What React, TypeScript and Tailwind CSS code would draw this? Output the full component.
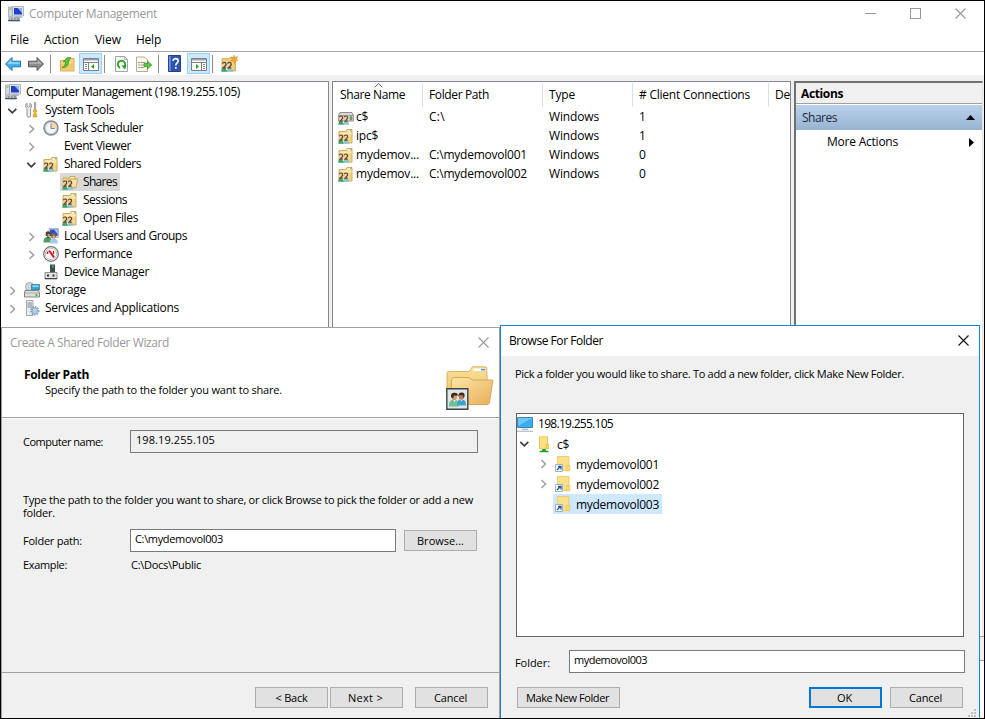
import { useLayoutEffect, useRef } from 'react'
import type { ReactNode } from 'react'
import clsx from 'clsx'

// Text run spread to a fixed advance width, like GDI does with its hinted metrics
function T({ w, children, className }: { w: number; children: string; className?: string }) {
  const ref = useRef<HTMLSpanElement>(null)

  useLayoutEffect(() => {
    const el = ref.current
    if (!el) return
    el.style.letterSpacing = '0px'
    const natural = el.getBoundingClientRect().width
    el.style.letterSpacing = `${(w - natural) / children.length}px`
  }, [w, children])

  return (
    <span ref={ref} className={clsx('whitespace-pre w-fit shrink-0', className ?? 'inline-block')}>
      {children}
    </span>
  )
}

function Svg({ children, size = 16 }: { children: ReactNode; size?: number }) {
  return (
    <svg width={size} height={size} viewBox="0 0 16 16" className="shrink-0">
      {children}
    </svg>
  )
}

function ComputerIcon() {
  return (
    <Svg>
      <path d="M.5 1h4v10h-4z" fill="#d4d8dc" stroke="#8a9096" strokeWidth=".6" />
      <path d="M4.5.5h11v9.5h-11z" fill="#dfe4ec" stroke="#9aa4b2" strokeWidth=".8" />
      <path d="M6 2h8v6.5H6z" fill="#1f3fc4" />
      <path d="M9.500 2H14v5z" fill="#8fb4f4" />
      <path d="M6.500 10h7l1 2H6z" fill="#b9bec6" />
      <path d="M.5 11.500h11v4H.5z" fill="#8a949c" />
      <path d="M1.500 12.500H3v1H1.500zM4.500 12.500H6v1H4.500zM7.500 12.500H9v1H7.500z" fill="#eef2f3" />
      <path d="M0 14.500h12" stroke="#4c565e" />
      <path d="M1.500 3h2" stroke="#5fae4a" />
    </Svg>
  )
}

function People() {
  return (
    <>
      <path d="M.3 15.800c0-2.200.700-3.600 2.700-3.600s3 1.300 3 3.600z" fill="#3aa66f" />
      <path d="M5.300 15.800c0-2.200 1-3.600 3-3.600s2.900 1.600 2.900 3.600z" fill="#8cc5c9" />
      <path d="M4.200 12l1 2.500 1.300-2.500z" fill="#f4f8f4" />
      <ellipse cx="3.200" cy="9.500" rx="2.100" ry="2.900" fill="#ecd0a6" />
      <ellipse cx="8" cy="9.500" rx="2.100" ry="2.900" fill="#ecd0a6" />
      <path d="M1.300 8.200q1.400-2 3.100-.7q1 1.500-.6 2.900l-1.800 1.800h2.800" fill="none" stroke="#5b4630" strokeWidth="1.200" />
      <path d="M6.200 8.200q1.400-2 3.100-.7q1 1.500-.6 2.900l-1.800 1.800h2.800" fill="none" stroke="#5b4630" strokeWidth="1.200" />
    </>
  )
}

function SharedFolderIcon() {
  return (
    <Svg>
      <path d="M1 3.500h6.500L9 1.500h5V15H1z" fill="#f3d68c" stroke="#cba552" strokeWidth=".9" />
      <path d="M2 4.500h11.500v2H2z" fill="#fbeab6" />
      <path d="M9.800 3h3" stroke="#fff" />
      <path d="M12 2.800h1.500" stroke="#7f9cc4" />
      <People />
    </Svg>
  )
}

function OpenSharedIcon() {
  return (
    <Svg>
      <path d="M1 4h6l1-1.500h5V14H1z" fill="#f3d68c" stroke="#cba552" strokeWidth=".9" />
      <path d="M9 3.800h3" stroke="#fff" />
      <path d="M4.500 6H8l1-1h6.800L14 13.500H3z" fill="#f9e0a0" stroke="#cba552" strokeWidth=".9" />
      <People />
    </Svg>
  )
}

function NewShareIcon() {
  return (
    <Svg size={17}>
      <path d="M1 3.500h6l1-1h5.500V15H1z" fill="#f0cf7e" stroke="#cba552" strokeWidth=".9" />
      <People />
      <path d="M12.300 0l.9 2.300 2.500-.8-1.200 2.200 1.500 1.600-2.400.2-.8 2.400-1.100-2.300-2.600.3 1.500-1.900-1.400-2 2.300.3z" fill="#f7a436" stroke="#e5811a" strokeWidth=".4" />
    </Svg>
  )
}

function DriveShareIcon() {
  return (
    <Svg>
      <path d="M2 3.500h12l1.700 3V12H.3V6.500z" fill="#d9d9d9" stroke="#777" strokeWidth=".8" />
      <path d="M.3 6.500h15.400" stroke="#8f8f8f" strokeWidth=".8" />
      <path d="M12 7.700h2v3h-2z" fill="#45d40c" stroke="#666" strokeWidth=".5" />
      <People />
    </Svg>
  )
}

function ToolsIcon() {
  return (
    <Svg>
      <path
        d="M3 1.200v3l1.500 1 1.500-1v-3c2 1 2 4 .6 5.300V14c0 1.600-3.600 1.600-3.600 0V6.500C1 5 1.200 2.200 3 1.200z"
        fill="#e8eaec"
        stroke="#858b90"
        strokeWidth=".9"
      />
      <path d="M10.500.5h1.200v7h-1.200z" fill="#ccc" stroke="#777" strokeWidth=".6" />
      <path d="M9.500 8h3v2l-.6.5v1l.8 1V15H9.400v-2.500l.8-1v-1L9.500 10z" fill="#f2b620" stroke="#c98d08" strokeWidth=".6" />
    </Svg>
  )
}

function ClockIcon() {
  return (
    <Svg>
      <circle cx="8" cy="8" r="7" fill="#dde1e4" stroke="#858c92" strokeWidth="1.500" />
      <circle cx="8" cy="8" r="5.500" fill="#f1f6fa" stroke="#a9b0b6" strokeWidth=".5" />
      <path d="M8 8V2.500A5.500 5.500 0 0 1 13.500 8z" fill="#f6d9a0" />
      <path d="M8 3.500V8.500h3.700" stroke="#7c858f" strokeWidth="1" fill="none" />
    </Svg>
  )
}

function UsersIcon() {
  return (
    <Svg>
      <path d="M6 .5h9.500v9H6z" fill="#d8dde6" stroke="#9aa4b2" strokeWidth=".7" />
      <path d="M7 1.500h7.500V8H7z" fill="#2a4fcd" />
      <path d="M11 1.500h3.500V6z" fill="#a9c4f8" />
      <path d="M.5 14.500c0-4 1.500-5.500 4-5.500S9 10 9 14.500z" fill="#4f9a62" />
      <path d="M2.700 4.500q2.300-2.500 4.600 0V8H6v2H4.200V8H2.700z" fill="#54432c" />
      <path d="M4.700 6h2v3h-2z" fill="#cfa276" />
      <path d="M6.500 15.500c0-4 1.800-5 4-5s4.500 1 4.500 5z" fill="#a5cdea" />
      <path d="M8.200 6q2.300-2.500 4.600 0v3.500h-1.300V11H9.700V9.500H8.200z" fill="#80603c" />
      <path d="M9.700 7.500h2V11h-2z" fill="#e0b68c" />
    </Svg>
  )
}

function PerfIcon() {
  return (
    <Svg>
      <circle cx="8" cy="8" r="7.300" fill="#fff" stroke="#757575" strokeWidth="1.200" />
      <circle cx="8" cy="8" r="5.700" fill="#fff" stroke="#a5a5a5" strokeWidth=".7" />
      <path d="M4.500 8V5.500" stroke="#d3141c" strokeWidth="1.500" />
      <path d="M6 4.500l5 6.800" stroke="#d3141c" strokeWidth="2" />
      <path d="M10.500 8V5" stroke="#d3141c" strokeWidth="1.400" />
    </Svg>
  )
}

function DeviceIcon() {
  return (
    <Svg>
      <path d="M7 .5h5V9H7z" fill="#444b52" />
      <path d="M9 1.500h1.500v2H9z" fill="#53c452" />
      <path d="M2 8.500h12V15H2z" fill="#e2e2e2" stroke="#777" strokeWidth=".8" />
      <path d="M4 10.500h2v2H4zM9.500 10.500h2v2h-2z" fill="#333" />
      <path d="M2 14.500h12" stroke="#444" />
    </Svg>
  )
}

function StorageIcon() {
  return (
    <Svg>
      <circle cx="5.500" cy="4.500" r="4" fill="#d9dde0" stroke="#8b9298" strokeWidth=".8" />
      <circle cx="5.500" cy="4.500" r="1.200" fill="#fff" stroke="#8b9298" strokeWidth=".5" />
      <path d="M7.500 2.500h8V8h-8z" fill="#38a3d3" stroke="#2678a5" strokeWidth=".7" />
      <path d="M8.500 3.500h6V5h-6z" fill="#9ddcf5" />
      <path d="M1 8.500h13.500l1 2.500v4H.5v-4z" fill="#dedede" stroke="#6d6d6d" strokeWidth=".8" />
      <path d="M.5 11h15" stroke="#888" strokeWidth=".6" />
      <path d="M11.500 12h2v2h-2z" fill="#3fcc19" />
    </Svg>
  )
}

function ServicesIcon() {
  return (
    <Svg>
      <path d="M2.500.5H9v15H2.500z" fill="#e9ebed" stroke="#8e959c" strokeWidth=".8" />
      <path d="M3.500 3H8M3.500 5H8M3.500 7H8" stroke="#737b84" strokeWidth=".9" />
      <circle cx="10.800" cy="10.800" r="3.800" fill="none" stroke="#7d9fbd" strokeWidth="1.800" strokeDasharray="1.500 1" />
      <circle cx="10.800" cy="10.800" r="2.700" fill="#cfe0ee" stroke="#7d9fbd" strokeWidth=".9" />
      <circle cx="10.800" cy="10.800" r="1" fill="#fff" stroke="#6d8fae" strokeWidth=".5" />
    </Svg>
  )
}

function ArrowIcon({ back }: { back?: boolean }) {
  return back ? (
    <Svg>
      <path d="M.5 8L7 1.500v3.700h8.500v5.600H7v3.700z" fill="#45b1ec" stroke="#1b72b4" strokeWidth="1" />
      <path d="M2.300 7.700L6.200 3.900v2.300h8.300v1.500z" fill="#9bddfa" />
    </Svg>
  ) : (
    <Svg>
      <path d="M15.500 8L9 1.500v3.700H.5v5.600H9v3.700z" fill="#8c8c8c" stroke="#555" strokeWidth="1" />
      <path d="M13.700 7.700L9.800 3.900v2.300H1.500v1.500z" fill="#b4b4b4" />
    </Svg>
  )
}

function UpFolderIcon() {
  return (
    <Svg>
      <path d="M1.500 4.500h5l1.500-2h7V15H1.500z" fill="#f3d582" stroke="#c99c3c" strokeWidth=".8" />
      <path d="M2 8h12.500v6.500H2z" fill="#eec770" />
      <path d="M3 11.500c2.500-1 3.500-3 3.500-5.800H4L8.500 1.500h3.200L9.500 5.700c0 4-2.500 6.300-6.500 5.800z" fill="#56c23a" stroke="#2b8a17" strokeWidth=".6" />
    </Svg>
  )
}

function PaneIcon({ right }: { right?: boolean }) {
  return (
    <Svg>
      <path d="M.5 2.500h15v12H.5z" fill="#fff" stroke="#7b8086" />
      <path d="M1 3h14v1.500H1z" fill="#9ba1a8" />
      <path d="M1 6.500h14" stroke="#7b8086" />
      <path d={right ? 'M10.500 6.500v8' : 'M5.500 6.500v8'} stroke="#7b8086" />
      {right ? (
        <>
          <path d="M5 8v5l3-2.500z" fill="#2ba31e" />
          <path d="M12 8.500h2M12 10.500h2M12 12.500h2" stroke="#7b8086" strokeWidth=".9" />
        </>
      ) : (
        <>
          <path d="M11 8v5L8 10.500z" fill="#2ba31e" />
          <path d="M2 8.500h2M2 10.500h2M2 12.500h2" stroke="#7b8086" strokeWidth=".9" />
        </>
      )}
    </Svg>
  )
}

function RefreshIcon() {
  return (
    <Svg>
      <path d="M2.500.5h9l3 3v12h-12z" fill="#fafafa" stroke="#9a9a9a" strokeWidth=".9" />
      <path d="M11.500.5v3h3" fill="none" stroke="#9a9a9a" strokeWidth=".8" />
      <path d="M7 11.800A3.700 3.700 0 1 1 11.500 10.500" fill="none" stroke="#2fa12b" strokeWidth="1.900" />
      <path d="M8.500 9.500h5L12 13.800z" fill="#2fa12b" />
    </Svg>
  )
}

function ExportIcon() {
  return (
    <Svg>
      <path d="M.5 1h8l3 3v11.500H.5z" fill="#fdf9ea" stroke="#a9a48c" strokeWidth=".9" />
      <path d="M2.500 6.500h1M2.500 9h1M2.500 11.500h1" stroke="#444" />
      <path d="M4.500 6.500h5M4.500 9h4M4.500 11.500h4" stroke="#8c8c8c" strokeWidth=".9" />
      <path d="M8 7.500h3.500V5l4.300 4-4.300 4v-2.500H8z" fill="#5cc83f" stroke="#2f9421" strokeWidth=".7" />
    </Svg>
  )
}

function HelpIcon() {
  return (
    <svg width="13" height="17" viewBox="0 0 14 17" preserveAspectRatio="none" className="shrink-0">
      <path d="M.5.5h13v16H.5z" fill="#2f54b0" stroke="#1e3a86" />
      <path d="M1 1h2v15H1z" fill="#6f8fdc" />
      <path d="M5.500 6c0-3.300 5.500-3.200 5.500 0 0 2-2.600 2-2.600 4.500M8.400 12v1.800" stroke="#fff" strokeWidth="1.700" fill="none" />
    </svg>
  )
}

function Chevron({ open }: { open?: boolean }) {
  return (
    <svg width="10" height="10" viewBox="0 0 10 10" className="shrink-0">
      {open ? (
        <path d="M1.300 2.800l4 4 4-4" fill="none" stroke="#3f3f3f" strokeWidth="1.700" />
      ) : (
        <path d="M3.500 1l4 4-4 4" fill="none" stroke="#a3a3a3" strokeWidth="1.600" />
      )}
    </svg>
  )
}

function Close({ color }: { color: string }) {
  return (
    <svg width="11" height="11" viewBox="0 0 11 11" className="shrink-0">
      <path d="M.5.5l10 10M10.500.5l-10 10" stroke={color} strokeWidth="1.100" />
    </svg>
  )
}

function MonitorIcon() {
  return (
    <Svg>
      <path d="M.5 1.500h15v10H.5z" fill="#3aaef2" stroke="#3a7ba8" strokeWidth=".9" />
      <path d="M1 2h14L1 10z" fill="#6cc8fa" />
      <path d="M5 13.200h6" stroke="#8fa4b3" />
      <path d="M0 15.200h16" stroke="#9fb0bd" />
    </Svg>
  )
}

function NetFolderIcon() {
  return (
    <svg width="12" height="17" viewBox="0 0 12 17" className="shrink-0">
      <path d="M1.500.8h8v12h-8z" fill="#fce184" stroke="#e3bd4a" strokeWidth=".8" />
      <path d="M8 8h2.500v4.800H8z" fill="#f7d468" stroke="#e3bd4a" strokeWidth=".7" />
      <path d="M6 13v3M1.500 15.500h9M4 14h4" stroke="#18a62c" strokeWidth="1.400" />
    </svg>
  )
}

function LinkFolderIcon() {
  return (
    <Svg>
      <path d="M2.500.5H14v14H2.500z" fill="#fbe08a" stroke="#e6c257" strokeWidth=".7" />
      <path d="M11.500 9.500h3.300V15h-3.300z" fill="#f8d977" stroke="#e6c257" strokeWidth=".6" />
      <path d="M.5 8.500h7v7h-7z" fill="#fff" stroke="#8ba0b5" strokeWidth=".8" />
      <path d="M2 14l3-3M3 10.500h3v3" stroke="#1b55a5" strokeWidth="1.300" fill="none" />
    </Svg>
  )
}

function BigFolderIcon() {
  return (
    <svg width="48" height="44" viewBox="0 0 48 44">
      <defs>
        <linearGradient id="fback" x1="0" y1="0" x2="0" y2="1">
          <stop offset="0" stopColor="#fbe19a" />
          <stop offset="1" stopColor="#e9bb62" />
        </linearGradient>
        <linearGradient id="ffront" x1="0" y1="0" x2="1" y2="1">
          <stop offset="0" stopColor="#fde7a8" />
          <stop offset="1" stopColor="#e8ae58" />
        </linearGradient>
      </defs>
      <path d="M1 7q0-1.500 1.500-1.500H23L26.500.8H39q1.500 0 1.700 1.500l1.500 34H1z" fill="url(#fback)" stroke="#d6a64f" strokeWidth=".8" />
      <path d="M28 2.500h11V5H27z" fill="#fff" />
      <path d="M35 3.700h4" stroke="#5e8fe0" strokeWidth="1.600" />
      <path d="M5.500 15q.3-3.500 2.500-3.500h15l3.500 2.500h20.500L43.500 36.500q-.4 2-2 2H5z" fill="url(#ffront)" stroke="#d09d48" strokeWidth=".8" />
      <path d="M.8 22.800h21v20.400H.8z" fill="#dfe6e8" stroke="#3d4247" strokeWidth="1.400" />
      <path d="M3 40.500c0-5 1.500-7 5-7s4.700 2 4.700 7z" fill="#6fc092" />
      <path d="M11 39.500c0-4.500 1.500-6 4.300-6s4.700 1.500 4.700 6z" fill="#3fa3c9" />
      <path d="M7 33l1.500 3.500L10 33M14 33l1.300 2.500 1.300-2.500" fill="#fff" />
      <ellipse cx="8.300" cy="31" rx="2.600" ry="3.300" fill="#d09a72" />
      <path d="M5 31q-.5-4.500 3.500-4.300t3 3l-3.500-.3-1 3z" fill="#3d2a1b" />
      <ellipse cx="15.300" cy="30.500" rx="2.500" ry="3.200" fill="#b87c55" />
      <path d="M12.300 30.500q0-4.300 3.500-4.100t2.700 4.100l-1 2-.5-3-3-.5z" fill="#3d2a1b" />
    </svg>
  )
}

const tree = [
  { label: 'System Tools', w: 69, level: 1, open: true, icon: <ToolsIcon /> },
  { label: 'Task Scheduler', w: 79, level: 2, open: false, icon: <ClockIcon /> },
  { label: 'Event Viewer', w: 67, level: 2, open: false, icon: null },
  { label: 'Shared Folders', w: 77, level: 2, open: true, icon: <SharedFolderIcon /> },
  { label: 'Shares', w: 34, level: 3, icon: <OpenSharedIcon />, selected: true },
  { label: 'Sessions', w: 44, level: 3, icon: <SharedFolderIcon /> },
  { label: 'Open Files', w: 55, level: 3, icon: <SharedFolderIcon /> },
  { label: 'Local Users and Groups', w: 123, level: 2, open: false, icon: <UsersIcon /> },
  { label: 'Performance', w: 68, level: 2, open: false, icon: <PerfIcon /> },
  { label: 'Device Manager', w: 85, level: 2, icon: <DeviceIcon /> },
  { label: 'Storage', w: 41, level: 1, open: false, icon: <StorageIcon /> },
  { label: 'Services and Applications', w: 134, level: 1, open: false, icon: <ServicesIcon /> },
]

const indent = ['', 'pl-[6px]', 'pl-[25px]', 'pl-[44px]']

const shares = [
  { name: 'c$', nw: 12, path: 'C:\\', pw: 16, clients: '1', icon: <DriveShareIcon /> },
  { name: 'ipc$', nw: 22, path: '', pw: 0, clients: '1', icon: <SharedFolderIcon /> },
  { name: 'mydemov...', nw: 63, path: 'C:\\mydemovol001', pw: 98, clients: '0', icon: <SharedFolderIcon /> },
  { name: 'mydemov...', nw: 63, path: 'C:\\mydemovol002', pw: 98, clients: '0', icon: <SharedFolderIcon /> },
]

const folders = [
  { label: 'mydemovol001', expandable: true },
  { label: 'mydemovol002', expandable: true },
  { label: 'mydemovol003', expandable: false },
]

function Button({ label, w, className }: { label: string; w: number; className?: string }) {
  return (
    <button className={clsx('h-[21px] bg-[#e1e1e1] flex items-center justify-center shrink-0', className)}>
      <T w={w}>{label}</T>
    </button>
  )
}

function Separator() {
  return <div className="w-px h-[18px] bg-[#8d8d8d] shrink-0" />
}

function TitleBar() {
  return (
    <div className="h-[26px] flex items-center pl-[7px] pr-[18px] text-[#999] shrink-0">
      <ComputerIcon />
      <T w={128} className="ml-[5px]">Computer Management</T>
      <div className="ml-auto flex items-center gap-[34px] pb-px">
        <div className="w-[11px] h-px bg-[#999]" />
        <div className="w-[11px] h-[11px] border border-[#999]" />
        <Close color="#999" />
      </div>
    </div>
  )
}

function Toolbar() {
  return (
    <div className="h-[23px] flex items-center pl-[4px] shrink-0">
      <ArrowIcon back />
      <div className="w-[7px]" />
      <ArrowIcon />
      <div className="w-[6px]" />
      <Separator />
      <div className="w-[8px]" />
      <UpFolderIcon />
      <div className="w-[4px]" />
      <div className="w-[23px] h-[21px] bg-[#cce8ff] border border-[#99d1ff] flex items-center justify-center">
        <PaneIcon />
      </div>
      <div className="w-[2px]" />
      <Separator />
      <div className="w-[8px]" />
      <RefreshIcon />
      <div className="w-[7px]" />
      <ExportIcon />
      <div className="w-[6px]" />
      <Separator />
      <div className="w-[9px]" />
      <HelpIcon />
      <div className="w-[6px]" />
      <div className="w-[23px] h-[21px] bg-[#cce8ff] border border-[#99d1ff] flex items-center justify-center">
        <PaneIcon right />
      </div>
      <div className="w-[2px]" />
      <Separator />
      <div className="w-[8px]" />
      <NewShareIcon />
    </div>
  )
}

function TreePane() {
  return (
    <div className="w-[328px] bg-white border-t border-r border-[#828790] pt-px">
      <div className="h-[18px] flex items-center pl-[4px]">
        <ComputerIcon />
        <T w={214} className="ml-[5px]">Computer Management (198.19.255.105)</T>
      </div>
      {tree.map((n) => (
        <div key={n.label} className={clsx('h-[18px] flex items-center', indent[n.level])}>
          <div className="w-[10px] pt-[2px]">{n.open !== undefined && <Chevron open={n.open} />}</div>
          <div className={clsx('h-[18px] flex items-center ml-[5px] pl-[2px] pr-[3px]', n.selected && 'bg-[#d9d9d9]')}>
            <div className="w-[16px] mr-[5px]">{n.icon}</div>
            <T w={n.w}>{n.label}</T>
          </div>
        </div>
      ))}
    </div>
  )
}

function ListPane() {
  const cell = 'h-[24px] flex items-center border-r border-[#e0e0e0] pl-[6px] pb-px'
  return (
    <div className="w-[459px] ml-[3px] bg-white border-t border-x border-[#828790] overflow-hidden">
      <div className="flex h-[25px] pt-px">
        <div className={clsx(cell, 'w-[90px] relative')}>
          <T w={65} className="ml-px">Share Name</T>
          <svg width="9" height="5" viewBox="0 0 9 5" className="absolute left-[41px] top-0">
            <path d="M.7 4.300l3.800-3.600 3.800 3.600" fill="none" stroke="#5f5f5f" />
          </svg>
        </div>
        <div className={clsx(cell, 'w-[120px]')}>
          <T w={60}>Folder Path</T>
        </div>
        <div className={clsx(cell, 'w-[90px]')}>
          <T w={26}>Type</T>
        </div>
        <div className={clsx(cell, 'w-[136px]')}>
          <T w={111}># Client Connections</T>
        </div>
        <div className="h-[24px] flex items-center pl-[6px] pb-px">
          <T w={15}>De</T>
        </div>
      </div>
      {shares.map((s, i) => (
        <div key={i} className="h-[19px] flex items-center pl-[5px]">
          <div className="w-[91px] flex items-center gap-[2px]">
            {s.icon}
            <T w={s.nw}>{s.name}</T>
          </div>
          <div className="w-[120px]">{s.path && <T w={s.pw}>{s.path}</T>}</div>
          <div className="w-[90px]">
            <T w={50}>Windows</T>
          </div>
          <T w={7}>{s.clients}</T>
        </div>
      ))}
    </div>
  )
}

function ActionsPane() {
  return (
    <div className="w-[189px] ml-[3px] bg-white border-t-2 border-l-2 border-[#707070] border-r border-r-[#e3e3e3]">
      <div className="h-[21px] bg-[#f0f0f0] border-b border-[#a0a0a0] flex items-center pl-[5px] pt-[2px]">
        <T w={42} className="font-bold">Actions</T>
      </div>
      <div className="mt-px h-[25px] bg-linear-to-b from-[#bbd1e9] to-[#98b3d3] flex items-center pl-[6px] pr-[7px] text-[#1e2a3c]">
        <T w={35}>Shares</T>
        <svg width="9" height="5" viewBox="0 0 9 5" className="ml-auto">
          <path d="M0 5h9L4.500 0z" fill="#000" />
        </svg>
      </div>
      <div className="h-[24px] flex items-center pl-[31px] pr-[8px]">
        <T w={71}>More Actions</T>
        <svg width="5" height="9" viewBox="0 0 5 9" className="ml-auto">
          <path d="M0 0v9l5-4.500z" fill="#000" />
        </svg>
      </div>
    </div>
  )
}

function Wizard() {
  return (
    <div className="absolute left-0 top-[326px] w-[499px] h-[391px] bg-[#f0f0f0] border-t border-x border-[#a0a0a0] flex flex-col text-[11px] leading-[13px]">
      <div className="h-[90px] bg-white border-b border-[#a0a0a0] flex flex-col shrink-0">
        <div className="h-[29px] flex items-center justify-between pl-[8px] pr-[10px] text-[12px] text-[#999]">
          <T w={159}>Create A Shared Folder Wizard</T>
          <Close color="#999" />
        </div>
        <div className="flex justify-between pl-[22px] pr-[5px]">
          <div className="pt-[11px] flex flex-col">
            <T w={65} className="font-bold h-[15px] text-[12px]">Folder Path</T>
            <T w={237} className="ml-[21px]">Specify the path to the folder you want to share.</T>
          </div>
          <div className="pt-[9px]">
            <BigFolderIcon />
          </div>
        </div>
      </div>
      <div className="h-px mr-[2px] bg-white shrink-0" />
      <div className="pl-[21px] pt-[11px]">
        <div className="flex h-[23px]">
          <div className="w-[107px] pt-[5px]">
            <T w={80}>Computer name:</T>
          </div>
          <div className="w-[348px] h-[23px] border border-[#7a7a7a] pl-[5px] pt-[2px]">
            <T w={79}>198.19.255.105</T>
          </div>
        </div>
        <div className="mt-[40px] flex flex-col">
          <T w={450}>Type the path to the folder you want to share, or click Browse to pick the folder or add a new</T>
          <T w={32}>folder.</T>
        </div>
        <div className="flex mt-[10px] h-[23px]">
          <div className="w-[107px] pt-[5px]">
            <T w={59}>Folder path:</T>
          </div>
          <div className="w-[266px] h-[23px] bg-white border border-[#7a7a7a] pl-[4px] pt-[2px]">
            <T w={88}>C:\mydemovol003</T>
          </div>
          <Button label="Browse..." w={47} className="w-[73px] ml-[8px] mt-px border border-[#adadad]" />
        </div>
        <div className="flex mt-[6px]">
          <div className="w-[108px]">
            <T w={44}>Example:</T>
          </div>
          <T w={70}>C:\Docs\Public</T>
        </div>
      </div>
      <div className="mt-auto h-[46px] border-t border-[#a0a0a0] flex pl-[253px] pt-[14px] shrink-0">
        <Button label="< Back" w={32} className="w-[73px] border border-[#adadad]" />
        <Button label="Next >" w={35} className="w-[73px] ml-[2px] pr-[2px] border border-[#adadad]" />
        <Button label="Cancel" w={33} className="w-[73px] ml-[12px] pr-[2px] border border-[#adadad]" />
      </div>
    </div>
  )
}

function BrowseDialog() {
  return (
    <div className="absolute left-[499px] top-[324px] w-[480px] h-[393px] bg-[#f0f0f0] border-t border-x border-[#1883d7] text-[11px] leading-[13px]">
      <div className="h-[30px] bg-white flex items-center justify-between pl-[8px] pr-[10px] pb-[2px] text-[12px]">
        <T w={94}>Browse For Folder</T>
        <Close color="#111" />
      </div>
      <div className="ml-[14px] mt-[11px] h-[13px]">
        <T w={389}>Pick a folder you would like to share. To add a new folder, click Make New Folder.</T>
      </div>
      <div className="ml-[15px] mt-[33px] w-[448px] h-[224px] bg-white border border-[#646464] text-[12px]">
        <div className="h-[20px] flex items-center gap-[5px] pb-px">
          <MonitorIcon />
          <T w={75}>198.19.255.105</T>
        </div>
        <div className="h-[20px] flex items-center pl-[2px]">
          <Chevron open />
          <div className="w-[9px]" />
          <NetFolderIcon />
          <T w={12} className="ml-[7px]">c$</T>
        </div>
        {folders.map((f) => (
          <div key={f.label} className="h-[20px] flex items-center pl-[21px]">
            <div className="w-[10px]">{f.expandable && <Chevron />}</div>
            <div className={clsx('h-[20px] flex items-center ml-[5px] pl-[2px] pr-[3px] gap-[5px]', !f.expandable && 'bg-[#cde8ff]')}>
              <LinkFolderIcon />
              <T w={83}>{f.label}</T>
            </div>
          </div>
        ))}
      </div>
      <div className="flex mt-[13px] pl-[14px]">
        <div className="w-[54px] pt-[6px]">
          <T w={35}>Folder:</T>
        </div>
        <div className="w-[396px] h-[23px] bg-white border border-[#7a7a7a] pl-[4px] pt-[2px]">
          <T w={73}>mydemovol003</T>
        </div>
      </div>
      <div className="flex mt-[14px] pl-[16px]">
        <Button label="Make New Folder" w={83} className="w-[103px] pr-[2px] border border-[#adadad]" />
        <Button label="OK" w={15} className="w-[73px] ml-[189px] pr-[2px] border-2 border-[#0078d7]" />
        <Button label="Cancel" w={33} className="w-[73px] ml-[8px] pr-[2px] border border-[#adadad]" />
      </div>
      <svg width="9" height="9" viewBox="0 0 9 9" className="absolute right-[2px] bottom-0" fill="#bfbfbf">
        <path d="M6 0h2v2H6zM3 3h2v2H3zM6 3h2v2H6zM0 6h2v2H0zM3 6h2v2H3zM6 6h2v2H6z" />
      </svg>
    </div>
  )
}

export default function App() {
  return (
    <div className="relative w-[985px] h-[719px] overflow-hidden bg-white border border-black text-black text-[12px] leading-[16px] font-['Open_Sans','Noto_Sans',sans-serif] flex flex-col">
      <TitleBar />
      <div className="h-[24px] flex items-center pl-[9px] pt-[2px] shrink-0">
        <T w={19}>File</T>
        <T w={35} className="ml-[15px]">Action</T>
        <T w={26} className="ml-[16px]">View</T>
        <T w={25} className="ml-[15px]">Help</T>
      </div>
      <div className="h-px bg-[#a8a8a8] shrink-0" />
      <Toolbar />
      <div className="h-[561px] bg-[#f0f0f0] pt-[6px] flex shrink-0">
        <TreePane />
        <ListPane />
        <ActionsPane />
      </div>
      <div className="h-[25px] bg-[#f0f0f0] border-y border-[#a0a0a0] shrink-0" />
      <Wizard />
      <BrowseDialog />
    </div>
  )
}
